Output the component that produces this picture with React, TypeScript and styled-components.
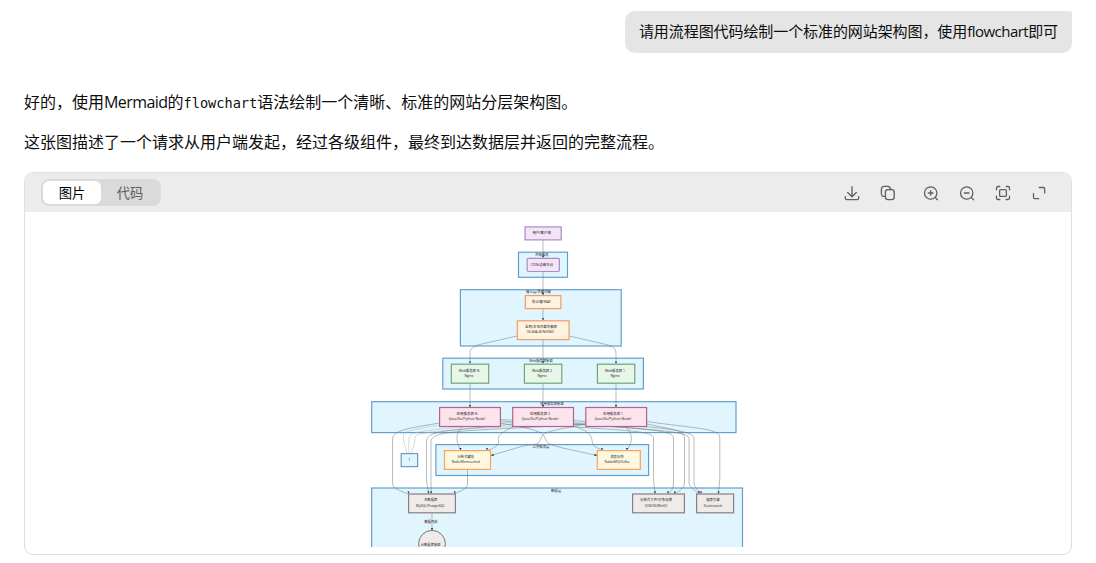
import { useState } from 'react';
import type { ReactNode } from 'react';
import styled, { createGlobalStyle } from 'styled-components';

type Kind = 'group' | 'user' | 'entry' | 'web' | 'app' | 'cache' | 'data';

interface Box {
  kind: Kind;
  x: number;
  y: number;
  w: number;
  h: number;
  rx?: number;
}

interface Label {
  text: string;
  x: number;
  y: number;
  w: number;
}

const COLORS: Record<Kind, { fill: string; stroke: string }> = {
  group: { fill: '#e1f5fe', stroke: '#649fca' },
  user: { fill: '#f3e5f5', stroke: '#a98bcb' },
  entry: { fill: '#fff3e0', stroke: '#ee9c6c' },
  web: { fill: '#e8f5e9', stroke: '#6fa577' },
  app: { fill: '#fce4ec', stroke: '#b7608f' },
  cache: { fill: '#fff8e1', stroke: '#f7a55c' },
  data: { fill: '#efebe9', stroke: '#8a7f7d' },
};

const GROUPS: Box[] = [
  { kind: 'group', x: 518.5, y: 252.2, w: 49, h: 25.1 },
  { kind: 'group', x: 460.4, y: 289.7, w: 160.8, h: 56.3 },
  { kind: 'group', x: 442.8, y: 358.2, w: 200.6, h: 30.8 },
  { kind: 'group', x: 371.7, y: 401.7, w: 364.3, h: 30.9 },
  { kind: 'group', x: 435.9, y: 444.6, w: 212.7, h: 30.9 },
  { kind: 'group', x: 401.2, y: 453.6, w: 16.4, h: 13 },
  { kind: 'group', x: 371.7, y: 488, w: 370.8, h: 90 },
];

const NODES: Box[] = [
  { kind: 'user', x: 525, y: 226.9, w: 36.2, h: 13 },
  { kind: 'user', x: 527.2, y: 258.3, w: 32.2, h: 13.2, rx: 1.2 },
  { kind: 'entry', x: 525.3, y: 295.6, w: 35.6, h: 13 },
  { kind: 'entry', x: 517.3, y: 320.8, w: 51.8, h: 18.8 },
  { kind: 'web', x: 451.3, y: 364.2, w: 37.4, h: 19 },
  { kind: 'web', x: 524.4, y: 364.2, w: 37.4, h: 19 },
  { kind: 'web', x: 597.4, y: 364.2, w: 37.4, h: 19 },
  { kind: 'app', x: 439.6, y: 407.5, w: 60.8, h: 19 },
  { kind: 'app', x: 512.7, y: 407.5, w: 60.8, h: 19 },
  { kind: 'app', x: 585.8, y: 407.5, w: 60.8, h: 19 },
  { kind: 'cache', x: 444.5, y: 450.6, w: 46, h: 18.8 },
  { kind: 'cache', x: 597.3, y: 450.6, w: 43, h: 18.8 },
  { kind: 'data', x: 408.6, y: 494, w: 46.8, h: 18.8 },
  { kind: 'data', x: 632.6, y: 494, w: 51.8, h: 18.8 },
  { kind: 'data', x: 696.6, y: 494, w: 37, h: 18.8 },
];

const EDGES: string[] = [
  'M543 240V257.5',
  'M543 272V295',
  'M543 309V320',
  'M543 340V363.5',
  'M517 336L484 343.5C476 345.5 470 347 470 353V363.5',
  'M569 336L602 343.5C610 345.5 616 347 616 353V363.5',
  'M470 383.5V407',
  'M543 383.5V407',
  'M616 383.5V407',
  'M439.5 423C410 428 393 430 392.6 439V484C392.6 489 402 491 408 494',
  'M512.5 424C450 431 427 430 426.5 441V480L428.5 493.5',
  'M585.5 424C480 431 432 429 431 441V493.5',
  'M462 427C454 435 457 443 460.5 450',
  'M513 427C494 436 499 438 498.5 442C498 447 491 449 487 450.5',
  'M585.5 424C552 431 544 431 541.5 437C539 445 537 444 523 446L491 455.5',
  'M500.5 423C532 429 542 431 544.5 437C547 445 552 445 563 448L597 455.5',
  'M574 426C594 433 591 438 592.5 443C593 447 599 448 602 450.5',
  'M626 427C634 435 632 443 627 450',
  'M500.5 421C610 431 653 429 653.5 438V480L655 493.5',
  'M574 423C640 430 673 429 673.5 438V483C673.5 489 671 491 668 493.5',
  'M647 424C674 430 684 430 684.5 438V482C684.5 488 680 491 674.5 493.5',
  'M500.5 419.5C610 427 688 429 689 438V482C689 487 694 490 699 493.5',
  'M574 420.5C650 427 693 429 694 438V482C694 487 698 490 701 493.5',
  'M647 421.5C690 428 719.5 428 719.8 437V478L718.5 493.5',
  'M467.5 470V484C467.5 489 460 491 454.5 494',
  'M432 513.5V530',
];

const FAINT_EDGES: string[] = [
  'M407 453C405 445 403 442 403.5 436C404 431 411 430 439 425',
  'M409 453C409 445 408 443 409.5 437C410 431 430 430 513 422',
  'M411.5 453C414 445 415 443 415 437C416 431 450 430 586 422',
];

const ARROWS: [number, number][] = [
  [543, 257.7], [543, 295], [543, 320.2], [543, 363.6], [470, 363.6], [616, 363.6],
  [470, 407], [543, 407], [616, 407], [408.5, 493.6], [428.5, 493.6], [431.2, 493.6],
  [454.8, 493.6], [460.5, 450], [487, 450.3], [602, 450.3], [627, 450], [655, 493.6],
  [668, 493.6], [674.8, 493.6], [698.8, 493.6], [701, 493.6], [718.5, 493.6], [432, 530],
];

const LABELS: Label[] = [
  { text: '用户/客户端', x: 541.7, y: 234.4, w: 18.5 },
  { text: '外部服务', x: 542, y: 256.2, w: 13.5 },
  { text: 'CDN/边缘节点', x: 542, y: 266.4, w: 22.5 },
  { text: '接入层/负载均衡', x: 538.5, y: 293.3, w: 25 },
  { text: '防火墙/WAF', x: 541.5, y: 303.3, w: 19 },
  { text: '全局/本地负载均衡器', x: 541, y: 328.3, w: 32 },
  { text: '(SLB/ALB/NGINX)', x: 540.5, y: 333.4, w: 27 },
  { text: 'Web服务器集群', x: 541, y: 362.2, w: 23.5 },
  { text: 'Web服务器 N', x: 469, y: 372.2, w: 20.5 },
  { text: 'Nginx', x: 469, y: 377.3, w: 9 },
  { text: 'Web服务器 2', x: 542, y: 372.2, w: 20 },
  { text: 'Nginx', x: 542, y: 377.3, w: 9 },
  { text: 'Web服务器 1', x: 615, y: 372.2, w: 20 },
  { text: 'Nginx', x: 615, y: 377.3, w: 9 },
  { text: '应用服务器集群', x: 552, y: 405.2, w: 23.5 },
  { text: '应用服务器 N', x: 467, y: 415.2, w: 21 },
  { text: '(Java/Go/Python Node)', x: 467, y: 420.3, w: 36.5 },
  { text: '应用服务器 2', x: 540, y: 415.2, w: 20 },
  { text: '(Java/Go/Python Node)', x: 540, y: 420.3, w: 36.5 },
  { text: '应用服务器 1', x: 613, y: 415.2, w: 20 },
  { text: '(Java/Go/Python Node)', x: 613, y: 420.3, w: 36.5 },
  { text: '公共服务层', x: 541, y: 448.3, w: 17 },
  { text: '分布式缓存', x: 465.7, y: 458.2, w: 17 },
  { text: 'Redis/Memcached', x: 465.7, y: 463.2, w: 28 },
  { text: '消息队列', x: 617, y: 458.2, w: 13.5 },
  { text: 'RabbitMQ/Kafka', x: 617, y: 463.2, w: 25 },
  { text: '数据层', x: 556, y: 492.2, w: 10 },
  { text: '主数据库', x: 430.7, y: 501.3, w: 13.5 },
  { text: 'MySQL/PostgreSQL', x: 430.5, y: 507, w: 29 },
  { text: '分布式文件/对象存储', x: 656, y: 501.3, w: 32 },
  { text: '(OSS/S3/MinIO)', x: 656, y: 507, w: 22.5 },
  { text: '搜索引擎', x: 713, y: 501.3, w: 13.5 },
  { text: 'Elasticsearch', x: 713, y: 507, w: 18.5 },
];

const Flowchart = () => (
  <Chart viewBox="25 212 1046 335" width="1046" height="335">
    {GROUPS.map((box, i) => (
      <Shape key={i} $kind={box.kind} x={box.x} y={box.y} width={box.w} height={box.h} />
    ))}
    {FAINT_EDGES.map((d) => (
      <Edge key={d} d={d} $faint />
    ))}
    {EDGES.map((d) => (
      <Edge key={d} d={d} />
    ))}
    {NODES.map((box, i) => (
      <Shape key={i} $kind={box.kind} x={box.x} y={box.y} width={box.w} height={box.h} rx={box.rx} />
    ))}
    <Replica cx="432" cy="543.8" r="13.4" />
    {ARROWS.map(([x, y], i) => (
      <path key={i} d={`M${x - 1.1} ${y - 2}h2.2l-1.1 2z`} fill="#222" />
    ))}
    <path d="M491 455.5l2.2-1.8l.6 2z M597 455.5l-2.2-1.8l-.6 2z" fill="#222" />
    <rect x="424" y="519.5" width="14" height="4.5" fill="#dfe5e8" />
    {LABELS.map(({ text, x, y, w }, i) => (
      <ChartText key={i} x={x} y={y} textLength={w} lengthAdjust="spacingAndGlyphs">
        {text}
      </ChartText>
    ))}
    <ChartText x="431" y="523.2" textLength="13" lengthAdjust="spacingAndGlyphs">
      数据同步
    </ChartText>
    <ChartText x="430.7" y="545.6" textLength="20" lengthAdjust="spacingAndGlyphs">
      从数据库集群
    </ChartText>
    <ChartText x="409.3" y="461.2">
      1
    </ChartText>
  </Chart>
);

const ACTIONS: { title: string; wide?: boolean; icon: ReactNode }[] = [
  {
    title: '下载',
    icon: <path d="M9 2.7v10M4.7 8.5L9 12.7l4.3-4.2M2.3 12.7v1.3q0 1.7 1.7 1.7h10q1.7 0 1.7-1.7v-1.3" />,
  },
  {
    title: '复制',
    wide: true,
    icon: (
      <>
        <rect x="6.4" y="5.6" width="8.8" height="10" rx="2.6" />
        <path d="M6.4 12.4H5.2q-2.8 0-2.8-2.8V5.2q0-2.8 2.8-2.8h3.6q2.4 0 2.9 3.2" />
      </>
    ),
  },
  {
    title: '放大',
    icon: (
      <>
        <circle cx="8.7" cy="9" r="6.2" />
        <path d="M13.2 13.4l2.3 2.3M6.3 9H11M8.7 6.6v4.7" />
      </>
    ),
  },
  {
    title: '缩小',
    icon: (
      <>
        <circle cx="8.7" cy="9" r="6.2" />
        <path d="M13.2 13.4l2.3 2.3M6.3 9H11" />
      </>
    ),
  },
  {
    title: '适应',
    icon: (
      <>
        <rect x="5.6" y="5.6" width="6.8" height="6.8" rx="1.2" />
        <path d="M2.5 5.8V4q0-1.5 1.5-1.5h1.8M12.2 2.5H14q1.5 0 1.5 1.5v1.8M15.5 12.2V14q0 1.5-1.5 1.5h-1.8M5.8 15.5H4q-1.5 0-1.5-1.5v-1.8" />
      </>
    ),
  },
  {
    title: '全屏',
    icon: <path d="M9.3 3.5h4q1.4 0 1.4 1.4v4M3.5 9.6v3.7q0 1.4 1.4 1.4h3.8" />,
  },
];

export default function App() {
  const [selectedTab, setSelectedTab] = useState('图片');

  return (
    <>
      <GlobalStyle />
      <Page>
        <Question>
          请用流程图代码绘制一个标准的网站架构图，使用<Latin>flowchart</Latin>即可
        </Question>
        <Answer>
          <p>
            好的，使用<Latin>Mermaid</Latin>的<code>flowchart</code>语法绘制一个清晰、标准的网站分层架构图。
          </p>
          <p>这张图描述了一个请求从用户端发起，经过各级组件，最终到达数据层并返回的完整流程。</p>
        </Answer>
        <Card>
          <CardHeader>
            <Tabs>
              {['图片', '代码'].map((tab) => (
                <Tab key={tab} $selected={selectedTab === tab} onClick={() => setSelectedTab(tab)}>
                  {tab}
                </Tab>
              ))}
            </Tabs>
            <Actions>
              {ACTIONS.map(({ title, wide, icon }) => (
                <ActionButton key={title} aria-label={title} $wide={wide}>
                  <svg width="18" height="18" viewBox="0 0 18 18">
                    {icon}
                  </svg>
                </ActionButton>
              ))}
            </Actions>
          </CardHeader>
          <Flowchart />
        </Card>
      </Page>
    </>
  );
}

const GlobalStyle = createGlobalStyle`
  * {
    box-sizing: border-box;
  }

  body {
    margin: 0;
    background: #fff;
    color: #0d0d0d;
    font-family: 'Open Sans', 'Noto Sans CJK SC', sans-serif;
  }
`;

const Page = styled.div`
  display: flex;
  flex-direction: column;
  height: 563px;
  padding: 11px 24px 8px;
  overflow: hidden;
`;

const Question = styled.div`
  align-self: flex-end;
  height: 42px;
  padding: 0 14px;
  border-radius: 10px 2px 10px 10px;
  background: #e5e5e5;
  font-size: 15px;
  line-height: 41px;
  letter-spacing: -0.08px;
  white-space: nowrap;
`;

const Latin = styled.span`
  letter-spacing: -0.035em;
`;

const Answer = styled.div`
  margin-top: 36px;
  font-size: 16px;
  line-height: 26px;
  white-space: nowrap;

  p {
    height: 26px;
    margin: 0 0 14px;
  }

  code {
    font-family: 'DejaVu Sans Mono', monospace;
    font-size: 13.6px;
  }
`;

const Card = styled.div`
  flex: none;
  height: 383px;
  margin-top: 3px;
  border: 1px solid #e0e0e0;
  border-radius: 9px;
  overflow: hidden;
`;

const CardHeader = styled.div`
  display: flex;
  align-items: center;
  justify-content: space-between;
  height: 39px;
  padding: 0 23px 0 16px;
  background: #ececec;
`;

const Tabs = styled.div`
  display: flex;
  width: 120px;
  height: 27px;
  padding: 2px;
  border-radius: 8px;
  background: #dadada;
`;

const Tab = styled.button<{ $selected: boolean }>`
  flex: 1;
  padding: 1px 0 0;
  border: 0;
  border-radius: 6px;
  background: ${(props) => (props.$selected ? '#fff' : 'transparent')};
  color: ${(props) => (props.$selected ? '#000' : '#5c5c5c')};
  font-family: inherit;
  font-size: 13.3px;
  line-height: 22px;
  cursor: pointer;
`;

const Actions = styled.div`
  display: flex;
  gap: 18px;
`;

const ActionButton = styled.button<{ $wide?: boolean }>`
  display: flex;
  margin-right: ${(props) => (props.$wide ? '7px' : '0')};
  padding: 0;
  border: 0;
  background: none;
  cursor: pointer;

  svg {
    fill: none;
    stroke: #5f5f5f;
    stroke-width: 1.3;
    stroke-linecap: round;
    stroke-linejoin: round;
  }
`;

const Chart = styled.svg`
  display: block;
`;

const Shape = styled.rect<{ $kind: Kind }>`
  fill: ${(props) => COLORS[props.$kind].fill};
  stroke: ${(props) => COLORS[props.$kind].stroke};
  stroke-width: 1.2;
`;

const Replica = styled.circle`
  fill: #efebe9;
  stroke: #716765;
  stroke-width: 0.9;
`;

const Edge = styled.path<{ $faint?: boolean }>`
  fill: none;
  stroke: ${(props) => (props.$faint ? '#a9b7bf' : '#6f777b')};
  stroke-width: 0.5;
`;

const ChartText = styled.text`
  fill: #222;
  font-size: 3.5px;
  text-anchor: middle;
`;
